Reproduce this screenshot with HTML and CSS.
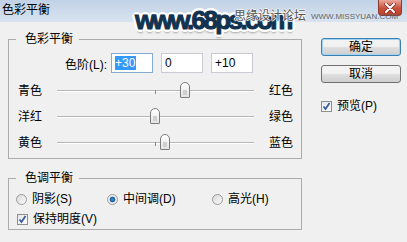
FILE: index.html
```html
<!DOCTYPE html>
<html lang="zh-CN">
<head>
    <meta charset="UTF-8">
    <meta name="viewport" content="width=device-width, initial-scale=1.0">
    <title>色彩平衡</title>
    <link rel="stylesheet" href="styles.css">
</head>
<body>
    <div class="window">
        <!-- Barra de título -->
        <div class="titlebar">
            <span class="title">色彩平衡</span>
            <span class="close">
                <svg width="12" height="10" viewBox="0 0 12 10">
                    <path d="M2 1 L10 9 M10 1 L2 9" stroke="#7a2a20" stroke-width="3.4" stroke-linecap="round"/>
                    <path d="M2 1 L10 9 M10 1 L2 9" stroke="#ffffff" stroke-width="2" stroke-linecap="round"/>
                </svg>
            </span>
        </div>

        <!-- Marca de agua -->
        <div class="watermark">
            <span class="wm-main">www.68ps.com</span>
            <span class="wm-cn">思缘设计论坛</span>
            <span class="wm-en">WWW.MISSYUAN.COM</span>
        </div>

        <div class="dialog">
            <div class="panels">
                <fieldset class="group balance">
                    <legend>色彩平衡</legend>
                    <div class="levels">
                        <span class="levels-label">色阶(L):</span>
                        <span class="field active"><span class="sel">+30</span></span>
                        <span class="field">0</span>
                        <span class="field">+10</span>
                    </div>
                    <div class="slider-row">
                        <span class="side">青色</span>
                        <span class="track">
                            <span class="tick"></span>
                            <span class="thumb" style="left: 65%"></span>
                        </span>
                        <span class="side right">红色</span>
                    </div>
                    <div class="slider-row">
                        <span class="side">洋红</span>
                        <span class="track">
                            <span class="tick"></span>
                            <span class="thumb" style="left: 49.5%"></span>
                        </span>
                        <span class="side right">绿色</span>
                    </div>
                    <div class="slider-row">
                        <span class="side">黄色</span>
                        <span class="track">
                            <span class="tick"></span>
                            <span class="thumb" style="left: 55%"></span>
                        </span>
                        <span class="side right">蓝色</span>
                    </div>
                </fieldset>

                <fieldset class="group tone">
                    <legend>色调平衡</legend>
                    <div class="radios">
                        <label class="radio"><span class="dot"></span>阴影(S)</label>
                        <label class="radio"><span class="dot on"></span>中间调(D)</label>
                        <label class="radio"><span class="dot"></span>高光(H)</label>
                    </div>
                    <label class="check"><span class="box"><svg width="9" height="9" viewBox="0 0 9 9"><path d="M1.5 4.5 L3.5 7 L7.5 1" fill="none" stroke="#3b5aa6" stroke-width="1.8"/></svg></span>保持明度(V)</label>
                </fieldset>
            </div>

            <div class="actions">
                <button class="btn default">确定</button>
                <button class="btn">取消</button>
                <label class="check preview"><span class="box"><svg width="9" height="9" viewBox="0 0 9 9"><path d="M1.5 4.5 L3.5 7 L7.5 1" fill="none" stroke="#3b5aa6" stroke-width="1.8"/></svg></span>预览(P)</label>
            </div>
        </div>
    </div>
</body>
</html>
```
FILE: styles.css
```css
body {
    margin: 0;
    font-family: 'Liberation Sans', 'Noto Sans CJK SC', sans-serif;
    font-size: 12px;
    color: #000;
    background: #f0f0f0;
}
.window {
    position: relative;
    width: 407px;
    height: 242px;
    overflow: hidden;
    background: #f0f0f0;
}
.titlebar {
    display: flex;
    justify-content: space-between;
    align-items: flex-start;
    height: 22px;
    background: linear-gradient(#c1d2e6, #d8e3ef);
}
.title {
    margin: 3px 0 0 2px;
    line-height: 14px;
}
.close {
    display: flex;
    justify-content: center;
    align-items: center;
    width: 24px;
    height: 16px;
    margin-right: 5px;
    box-sizing: border-box;
    border: 1px solid #8d3a2f;
    border-top: none;
    border-radius: 0 0 4px 4px;
    background: linear-gradient(#e9a99a, #c9503b 55%, #c0402c);
}
.watermark {
    position: absolute;
    top: 0;
    left: 0;
    width: 100%;
    height: 40px;
    pointer-events: none;
}
.wm-main {
    position: absolute;
    left: 135px;
    top: 7px;
    font-family: 'Liberation Sans', sans-serif;
    font-weight: 700;
    font-size: 26px;
    line-height: 26px;
    letter-spacing: -2.6px;
    color: #12324f;
    -webkit-text-stroke: 1px #12324f;
    text-shadow: 2px 0 0 #fff, -2px 0 0 #fff, 0 2px 0 #fff, 0 -2px 0 #fff,
        2px 2px 0 #fff, -2px -2px 0 #fff, 2px -2px 0 #fff, -2px 2px 0 #fff,
        3px 0 0 #fff, -3px 0 0 #fff, 0 3px 0 #fff, 0 -3px 0 #fff,
        0 4px 2px rgba(0, 0, 0, 0.3);
}
.wm-cn {
    position: absolute;
    left: 234px;
    top: 8px;
    font-family: 'Noto Sans CJK SC', sans-serif;
    font-size: 12px;
    line-height: 14px;
    color: #555;
    text-shadow: 1px 0 0 #f4f4f4, -1px 0 0 #f4f4f4, 0 1px 0 #f4f4f4, 0 -1px 0 #f4f4f4;
}
.wm-en {
    position: absolute;
    left: 311px;
    top: 12px;
    font-size: 8px;
    line-height: 10px;
    color: #666;
}
.dialog {
    display: flex;
    padding: 10px 0 0 8px;
}
.panels {
    width: 294px;
}
.group {
    margin: 0;
    padding: 0 0 0 7px;
    border: 1px solid #acacac;
    min-width: 0;
}
.group legend {
    padding: 0 6px 0 9px;
    line-height: 14px;
}
.balance {
    padding-bottom: 2px;
}
.levels {
    display: flex;
    align-items: center;
    margin: 7px 0 5px 42px;
}
.levels-label {
    width: 53px;
    padding-right: 4px;
    box-sizing: border-box;
    text-align: right;
}
.field {
    display: flex;
    align-items: center;
    width: 42px;
    height: 20px;
    margin-right: 8px;
    padding-left: 3px;
    box-sizing: border-box;
    border: 1px solid #c8ccd2;
    background: #fff;
}
.field.active {
    border-color: #86acd6;
}
.sel {
    background: #3399ff;
    color: #fff;
    line-height: 14px;
    padding-right: 1px;
}
.slider-row {
    display: flex;
    align-items: center;
    height: 26px;
    padding-left: 2px;
}
.side {
    width: 39px;
    line-height: 14px;
}
.side.right {
    width: auto;
    margin-left: 15px;
}
.track {
    position: relative;
    width: 197px;
    height: 1px;
    border-bottom: 1px solid #fff;
    background: #b6b6b6;
}
.tick {
    position: absolute;
    left: 98px;
    top: 0;
    width: 1px;
    height: 4px;
    background: #8a8a8a;
}
.thumb {
    position: absolute;
    top: -8px;
    width: 10px;
    height: 16px;
    margin-left: -5px;
    box-sizing: border-box;
    border: 1px solid #7d7d7d;
    border-radius: 5px 5px 1px 1px;
    background: linear-gradient(#ffffff, #e4e4e4);
}
.thumb::after {
    content: "";
    position: absolute;
    left: 2px;
    top: 7px;
    width: 4px;
    height: 5px;
    background: #cfcfcf;
}
.tone {
    margin-top: 12px;
}
.radios {
    display: grid;
    grid-template-columns: 91px 105px auto;
    height: 20px;
    margin-top: 4px;
    align-items: center;
}
.radio,
.check {
    display: flex;
    align-items: center;
    line-height: 14px;
}
.dot {
    width: 11px;
    height: 11px;
    margin-right: 5px;
    box-sizing: border-box;
    border: 1px solid #9a9a9a;
    border-radius: 50%;
    background: linear-gradient(135deg, #d8d8d8, #fbfbfb);
}
.dot.on {
    background: radial-gradient(circle, #3f8fd0 0, #1d5f9a 2.5px, #e8e8e8 3.2px, #fafafa 5px);
}
.check {
    height: 20px;
}
.box {
    display: flex;
    justify-content: center;
    align-items: center;
    width: 11px;
    height: 11px;
    margin: 0 5px 0 1px;
    box-sizing: border-box;
    border: 1px solid #8e8f8f;
    background: linear-gradient(135deg, #e6e6e6, #fdfdfd);
}
.actions {
    display: flex;
    flex-direction: column;
    align-items: flex-start;
    margin-left: 19px;
    padding-top: 6px;
}
.btn {
    width: 80px;
    height: 18px;
    margin: 0 0 9px;
    padding: 0;
    font: inherit;
    line-height: 14px;
    border: 1px solid #707070;
    border-radius: 3px;
    background: linear-gradient(#f2f2f2 45%, #dddddd 55%, #cfcfcf);
}
.btn.default {
    border-color: #3c7fb1;
    box-shadow: inset 0 0 0 1px #9fd3f5;
}
.check.preview {
    height: 14px;
    margin-top: 7px;
}
.check.preview .box {
    margin-left: 0;
}
```
